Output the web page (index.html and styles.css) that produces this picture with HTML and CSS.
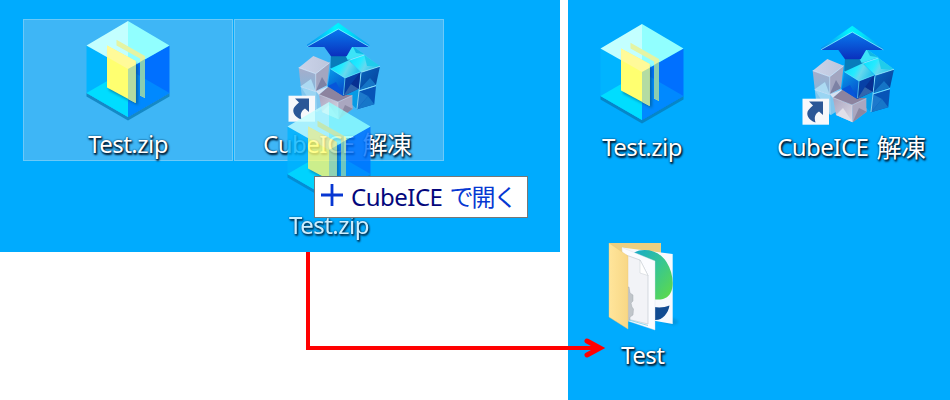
FILE: index.html
```html
<!DOCTYPE html>
<html lang="ja">
<head>
<meta charset="utf-8">
<title>CubeICE</title>
<link rel="stylesheet" href="styles.css">
</head>
<body>
<svg class="defs" width="0" height="0">
  <defs>
    <filter id="soft" x="-30%" y="-30%" width="160%" height="160%"><feGaussianBlur stdDeviation="1.5"/></filter>
    <linearGradient id="arrowTop" x1="0" x2="1"><stop offset="0" stop-color="#0a8cf0"/><stop offset=".45" stop-color="#00f5ff"/><stop offset=".65" stop-color="#00e4fa"/><stop offset="1" stop-color="#0698f0"/></linearGradient>
    <linearGradient id="arrowFront" x1="0" y1="0" x2="0" y2="1"><stop offset="0" stop-color="#0878ee"/><stop offset="1" stop-color="#0a30bd"/></linearGradient>
    <linearGradient id="cyan" x1="0" x2="1" y1="0" y2=".3"><stop offset="0" stop-color="#08dfff"/><stop offset=".45" stop-color="#25eaff"/><stop offset=".65" stop-color="#67d8ee"/><stop offset="1" stop-color="#28c4ec"/></linearGradient>
    <linearGradient id="blueLeft" x1="0" y1="0" x2=".5" y2="1"><stop offset="0" stop-color="#079eea"/><stop offset="1" stop-color="#0651ce"/></linearGradient>
    <linearGradient id="navy" x1="0" y1="0" x2="1" y2="1"><stop offset="0" stop-color="#0867bf"/><stop offset="1" stop-color="#063d99"/></linearGradient>
    <linearGradient id="grayTop" x1="0" x2="1"><stop offset="0" stop-color="#cbd3e9"/><stop offset="1" stop-color="#bdc6dc"/></linearGradient>
    <linearGradient id="grayLeft" x1="0" y1="0" x2="0" y2="1"><stop offset="0" stop-color="#a6adca"/><stop offset="1" stop-color="#85b7dc"/></linearGradient>
    <linearGradient id="grayFront" x1="0" y1="0" x2="1" y2="1"><stop offset="0" stop-color="#aaa4bf"/><stop offset="1" stop-color="#dbdae5"/></linearGradient>
    <linearGradient id="folderFront" x1="0" y1="0" x2="1" y2="0"><stop offset="0" stop-color="#ffe59b"/><stop offset="1" stop-color="#f8d785"/></linearGradient>
    <linearGradient id="green" x1="0" y1="0" x2="1" y2="1"><stop offset="0" stop-color="#18aac9"/><stop offset=".45" stop-color="#35c596"/><stop offset="1" stop-color="#61dc43"/></linearGradient>

    <symbol id="box" viewBox="0 0 84 106">
      <path d="M.5 76L42 100 83.5 76V79.500L42 103.500.5 79.500z" fill="#087ab5" opacity=".75"/>
      <path d="M.5 28.500L42 52V100L.5 76z" fill="#00b4ff"/>
      <path d="M42 52L83.500 28.500V76L42 100z" fill="#0070ff"/>
      <path d="M.5 76L42 52V100z" fill="#00ddff"/>
      <path d="M42 52L83.500 76 42 100z" fill="#0089ff"/>
      <path d="M42 4L83.500 28.500 42 52z" fill="#91ffff"/>
      <path d="M42 4V52L.5 28.500z" fill="#c3ffff"/>
      <path d="M23 33L52 48V88L23 73z" fill="#005685" opacity=".65" filter="url(#soft)"/>
      <path d="M30.500 22.700L59 39V81L54 78.500V41.500L30.500 28.500z" fill="#e4f4a3"/>
      <path d="M54 45L59 42V81L54 78.500z" fill="#8acdb1"/>
      <path d="M21 28.500L49.700 44V86L21 70.500z" fill="#ffff70"/>
      <path d="M21 28.500L49.700 44V48L42 52 21 40z" fill="#fffa99"/>
      <path d="M42 52L49.700 47.700V86L42 82z" fill="#b4dca2"/>
    </symbol>

    <symbol id="cubes" viewBox="0 0 98 110">
      <path d="M45 37H63L67 50 44.300 54z" fill="#087dbb"/>
      <path d="M66.700 29.300L78.300 37.300 61.700 43 59 38z" fill="#3ce4f8"/>
      <path d="M66.700 29.300L78.300 37.300 70 36z" fill="#12b8e5"/>
      <path d="M14.700 69.500L30 74.500 43 69 42 88 31 95 17 89z" fill="#7fc6ee"/>
      <path d="M14.700 69.500L30 74.500 31 95z" fill="#9ad5f3"/>
      <path d="M30 74.500L43 69 33 78z" fill="#d7e1f1"/>
      <path d="M12.700 50.700L29.700 56.700V74.300L14.700 69.300z" fill="url(#grayLeft)"/>
      <path d="M14.700 69.300L25 62 29.700 74.300z" fill="#acdaf2"/>
      <path d="M29.700 56.700L43.700 45.700 41 68.300 29.700 74.300z" fill="#a3a6c0"/>
      <path d="M29.700 74.300L36 60 41 68.300z" fill="#7d82a4"/>
      <path d="M27.300 39L43.700 45.700 29.700 56.700 12.700 50.700z" fill="url(#grayTop)"/>
      <path d="M12.700 50.700L29.700 56.700 43.700 45.700M29.700 56.700V74M14.700 69.500L29.700 74.500 41 69" fill="none" stroke="#e4edfb" stroke-width=".6"/>
      <path d="M33 77.700L52 85 52.700 102.300 36 95z" fill="url(#grayFront)"/>
      <path d="M52 85L66.700 78.300V91.700L52.700 102.300z" fill="#aaa7c0"/>
      <path d="M52.700 102.300L59 88 66.700 91.700z" fill="#8b87a1"/>
      <path d="M36 95L43 88 52.700 102.300z" fill="#e0dfe9"/>
      <path d="M43.300 69.300L66.700 78.300 52 85 33 77.700z" fill="#8c839f"/>
      <path d="M33 77.700L52 85 66.700 78.300M52 85V102" fill="none" stroke="#d8d7e8" stroke-width=".6"/>
      <path d="M57 78L73 72 71 92.300 66.500 88V78z" fill="#079be5"/>
      <path d="M73 74.300L90 69 88.300 87.300 71 92.300z" fill="#0754b7"/>
      <path d="M71 92.300L82 79 88.300 87.300z" fill="#1777c9"/>
      <path d="M73 74.300L82 79 71 92.300z" fill="#1d79cc"/>
      <path d="M75.300 55.300L94 49.300 90 67.700 73 73z" fill="url(#navy)"/>
      <path d="M73 73L84 61 90 67.700z" fill="#1575c6"/>
      <path d="M78.300 38L94 49.300 75.300 55.300 62.700 43.300z" fill="url(#cyan)"/>
      <path d="M78.300 38L81 49 94 49.300z" fill="#20cceb"/>
      <path d="M62.700 43.300L78.300 38M75.300 55.300L94 49.300M73 74L90 68.700M75 56L73 74 71 92" fill="none" stroke="#b0f3ff" stroke-width=".7"/>
      <path d="M44.300 51.700L59 61 57.300 79 41.700 69.300z" fill="url(#blueLeft)"/>
      <path d="M41.700 69.300L50 65 57.300 79z" fill="#0756da"/>
      <path d="M59 61L74.300 55 72.700 71.700 57.300 79z" fill="#0740a6"/>
      <path d="M57.300 79L65 67 72.700 71.700z" fill="#3165ad"/>
      <path d="M65 67L74.300 55 72.700 71.700z" fill="#073092"/>
      <path d="M44.300 51.700L62.700 43.300 74.300 55 59 61z" fill="url(#cyan)"/>
      <path d="M44.300 51.700L59 61 74.300 55M59 61L57.500 78" fill="none" stroke="#74ecff" stroke-width=".6"/>
      <path d="M52.300 5.700L83.300 28V30H21V27.700z" fill="url(#arrowTop)"/>
      <path d="M52.300 12.300L83.300 30H66L60.700 39.300H45L38.300 30H21z" fill="url(#arrowFront)"/>
      <path d="M21 29.700L52.300 12 83.300 29.700" fill="none" stroke="#b3faff" stroke-width=".6"/>
      <path d="M2.500 78.700H29V104.700H2.500z" fill="#f7f8fb"/>
      <path d="M9 81.500H23V95L19 91.500C15 94 14 97 15.500 102.500 8 100 5.500 94 8.500 90 10 88 11.500 86.500 13 85.500z" fill="#2b5797"/>
    </symbol>

    <symbol id="folder" viewBox="0 0 72 94">
      <path d="M54 84L66 87 71 84 65 80z" fill="#07679b" opacity=".35" filter="url(#soft)"/>
      <path d="M1 5H53V78H20z" fill="#edcf80"/>
      <path d="M14 9.500L64.700 16V86L42 82z" fill="#f7f9fd"/>
      <path d="M26 14.500C36 9.500 51 12 58.500 24 65 34 66.500 48 62.500 55 59 61.500 52 62.500 45 61L41 40z" fill="url(#green)"/>
      <path d="M46 69C51 70 57 69.500 61.500 67.500 60 76 54 83 46 82z" fill="#114b91"/>
      <path d="M14 9.500L47 23V92L17 82z" fill="#fbfcff" stroke="#d9e0e8" stroke-width=".4"/>
      <path d="M18 17L32 22 40 37.500V86L19 81z" fill="#f2f3f7" stroke="#c6ccd3" stroke-width=".7"/>
      <path d="M32 22V35L40 37.500z" fill="#fff" stroke="#c6ccd3" stroke-width=".5"/>
      <path d="M19 49L21 49 22 55 25 57V63L23 65 24 69 25.500 71 25 77 22 79V82L19 83z" fill="#c0c5ca" stroke="#9aa2aa" stroke-width=".4"/>
      <path d="M1 5L20 18V91L1 79z" fill="url(#folderFront)" stroke="#ebc774" stroke-width=".4"/>
      <path d="M21 82L40 87.500" stroke="#7bd1e8" stroke-width=".8"/>
    </symbol>
  </defs>
</svg>
<main class="stage">
  <section class="desktop before">
    <div class="selection first"></div>
    <div class="selection second"></div>
    <svg class="box box-selected"><use href="#box"/></svg>
    <div class="label zip-selected"><span class="latin zip">Test.zip</span></div>
    <svg class="cubes cubes-selected"><use href="#cubes"/></svg>
    <div class="label app-selected"><span class="latin cube">CubeICE</span><span class="cjk">解凍</span></div>
    <div class="ghost">
      <svg class="box"><use href="#box"/></svg>
      <div class="label"><span class="latin zip">Test.zip</span></div>
    </div>
    <div class="tip"><svg class="plus" viewBox="0 0 22 22"><path d="M11 0V22M0 11H22"/></svg><span class="latin tip-name">CubeICE</span><span class="tip-action">で開く</span></div>
  </section>
  <section class="desktop after">
    <svg class="box box-result"><use href="#box"/></svg>
    <div class="label zip-result"><span class="latin zip">Test.zip</span></div>
    <svg class="cubes cubes-result"><use href="#cubes"/></svg>
    <div class="label app-result"><span class="latin cube">CubeICE</span><span class="cjk">解凍</span></div>
    <svg class="folder"><use href="#folder"/></svg>
    <div class="label folder-label"><span class="latin">Test</span></div>
  </section>
  <svg class="connector" viewBox="0 0 304 112"><path d="M8 2V98H299"/><path class="head" d="M287 91L300 98 287 105"/></svg>
</main>
</body>
</html>
```

FILE: styles.css
```css
body { margin: 0; background: #fff; }
.defs { position: absolute; }
.stage { position: relative; width: 950px; height: 400px; display: flex; gap: 8px; align-items: flex-start; overflow: hidden; }
.desktop { position: relative; background: #00abfe; overflow: hidden; }
.before { width: 560px; height: 252px; }
.after { width: 382px; height: 400px; }
.selection { position: absolute; box-sizing: border-box; top: 19px; height: 142px; background: #3eb6f6; border: 1.5px solid #6cc9f8; }
.first { left: 23px; width: 210px; }
.second { left: 234px; width: 210px; }
.box { position: absolute; width: 84px; height: 106px; }
.cubes { position: absolute; width: 98px; height: 110px; }
.box-selected { left: 86px; top: 17px; }
.cubes-selected { left: 285.5px; top: 16.7px; }
.box-result { left: 32px; top: 20px; }
.cubes-result { left: 232px; top: 20px; }
.label { position: absolute; display: flex; align-items: center; height: 32px; color: #fff; font: 24px/32px "Noto Sans", "Noto Sans CJK JP", sans-serif; white-space: nowrap; text-shadow: 1px 1px 2px #001d35, 1px 2px 2px #002a48, 0 0 2px #00416b; }
.latin { letter-spacing: -.5px; }
.cjk { font: 25px/32px "Noto Sans CJK JP", sans-serif; margin-left: 8px; letter-spacing: -.5px; position: relative; top: -1px; }
.zip-selected { left: 88px; top: 128px; }
.app-selected { left: 263px; top: 128px; }
.zip-result { left: 602px; left: 34px; top: 131px; }
.app-result { left: 209px; top: 131px; }
.folder { position: absolute; left: 40px; top: 238px; width: 72px; height: 94px; overflow: visible; }
.folder-label { left: 53px; top: 339px; }
.ghost { position: absolute; left: 287px; top: 98.3px; width: 90px; height: 145px; opacity: .8; }
.ghost .label { left: 2px; top: 110.7px; }
.tip { position: absolute; box-sizing: border-box; left: 314px; top: 176px; width: 214px; height: 42px; display: flex; align-items: center; background: #fff; border: 1px solid #777; padding-left: 6px; font: 24px/32px "Noto Sans", sans-serif; }
.plus { width: 22px; height: 22px; margin-right: 8px; position: relative; top: -2px; }
.plus path { fill: none; stroke: #0736d2; stroke-width: 2.8; }
.tip-name { color: #04077c; }
.tip-action { font: 24px/32px "Noto Sans CJK JP", sans-serif; color: #0638d2; margin-left: 7px; letter-spacing: -2px; position: relative; top: -1px; }
.connector { position: absolute; left: 300px; top: 250px; width: 304px; height: 112px; overflow: visible; }
.connector path { fill: none; stroke: #f00; stroke-width: 4; }
.connector .head { stroke-width: 5; stroke-linecap: round; }
```
